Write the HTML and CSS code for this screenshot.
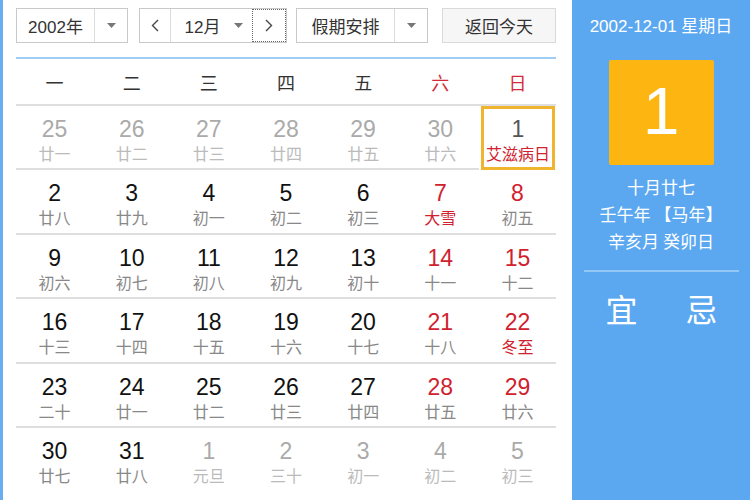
FILE: index.html
```html
<!DOCTYPE html>
<html lang="zh-CN">
<head>
<meta charset="utf-8">
<title>万年历</title>
<link rel="stylesheet" href="styles.css">
</head>
<body>
<div class="page">
  <div class="main">
    <div class="toolbar">
      <div class="sel year">
        <span class="sel-text">2002年</span>
        <span class="sel-arrow"><svg width="9" height="5" viewBox="0 0 9 5"><polygon points="0,0 9,0 4.5,5" fill="#777"/></svg></span>
      </div>
      <div class="sel month">
        <span class="nav"><svg width="8" height="13" viewBox="0 0 8 13"><polyline points="7,1 1.5,6.5 7,12" fill="none" stroke="#444" stroke-width="1.4"/></svg></span>
        <span class="sel-text">12月</span>
        <span class="sel-arrow inner"><svg width="9" height="5" viewBox="0 0 9 5"><polygon points="0,0 9,0 4.5,5" fill="#777"/></svg></span>
        <span class="nav next"><svg width="8" height="13" viewBox="0 0 8 13"><polyline points="1,1 6.5,6.5 1,12" fill="none" stroke="#444" stroke-width="1.4"/></svg></span>
      </div>
      <div class="sel holiday">
        <span class="sel-text">假期安排</span>
        <span class="sel-arrow"><svg width="9" height="5" viewBox="0 0 9 5"><polygon points="0,0 9,0 4.5,5" fill="#777"/></svg></span>
      </div>
      <div class="btn">返回今天</div>
    </div>
    <div class="blue-line"></div>
    <div class="week">
      <span>一</span><span>二</span><span>三</span><span>四</span><span>五</span><span class="red">六</span><span class="red">日</span>
    </div>
    <div class="grid">
      <div class="cell other"><b>25</b><i>廿一</i></div>
      <div class="cell other"><b>26</b><i>廿二</i></div>
      <div class="cell other"><b>27</b><i>廿三</i></div>
      <div class="cell other"><b>28</b><i>廿四</i></div>
      <div class="cell other"><b>29</b><i>廿五</i></div>
      <div class="cell other"><b>30</b><i>廿六</i></div>
      <div class="cell today wk"><b>1</b><i class="fest">艾滋病日</i></div>

      <div class="cell"><b>2</b><i>廿八</i></div>
      <div class="cell"><b>3</b><i>廿九</i></div>
      <div class="cell"><b>4</b><i>初一</i></div>
      <div class="cell"><b>5</b><i>初二</i></div>
      <div class="cell"><b>6</b><i>初三</i></div>
      <div class="cell wk"><b>7</b><i class="fest">大雪</i></div>
      <div class="cell wk"><b>8</b><i>初五</i></div>

      <div class="cell"><b>9</b><i>初六</i></div>
      <div class="cell"><b>10</b><i>初七</i></div>
      <div class="cell"><b>11</b><i>初八</i></div>
      <div class="cell"><b>12</b><i>初九</i></div>
      <div class="cell"><b>13</b><i>初十</i></div>
      <div class="cell wk"><b>14</b><i>十一</i></div>
      <div class="cell wk"><b>15</b><i>十二</i></div>

      <div class="cell"><b>16</b><i>十三</i></div>
      <div class="cell"><b>17</b><i>十四</i></div>
      <div class="cell"><b>18</b><i>十五</i></div>
      <div class="cell"><b>19</b><i>十六</i></div>
      <div class="cell"><b>20</b><i>十七</i></div>
      <div class="cell wk"><b>21</b><i>十八</i></div>
      <div class="cell wk"><b>22</b><i class="fest">冬至</i></div>

      <div class="cell"><b>23</b><i>二十</i></div>
      <div class="cell"><b>24</b><i>廿一</i></div>
      <div class="cell"><b>25</b><i>廿二</i></div>
      <div class="cell"><b>26</b><i>廿三</i></div>
      <div class="cell"><b>27</b><i>廿四</i></div>
      <div class="cell wk"><b>28</b><i>廿五</i></div>
      <div class="cell wk"><b>29</b><i>廿六</i></div>

      <div class="cell"><b>30</b><i>廿七</i></div>
      <div class="cell"><b>31</b><i>廿八</i></div>
      <div class="cell other"><b>1</b><i>元旦</i></div>
      <div class="cell other"><b>2</b><i>三十</i></div>
      <div class="cell other"><b>3</b><i>初一</i></div>
      <div class="cell other"><b>4</b><i>初二</i></div>
      <div class="cell other"><b>5</b><i>初三</i></div>
    </div>
  </div>
  <div class="side">
    <div class="side-date">2002-12-01 星期日</div>
    <div class="big-day">1</div>
    <div class="lunar">
      <div>十月廿七</div>
      <div>壬午年 【马年】</div>
      <div>辛亥月 癸卯日</div>
    </div>
    <div class="side-line"></div>
    <div class="yiji"><span>宜</span><span>忌</span></div>
  </div>
</div>
</body>
</html>
```

FILE: styles.css
```css
* { box-sizing: border-box; }
html, body { margin: 0; padding: 0; }
body {
  width: 750px;
  height: 500px;
  overflow: hidden;
  background: #fff;
  font-family: "Liberation Sans", "Noto Sans CJK SC", sans-serif;
  color: #222;
}
.page {
  display: flex;
  width: 750px;
  height: 500px;
}
.main {
  width: 572px;
  border-left: 3px solid #69adf0;
  padding: 8px 16px 0 13px;
}
.toolbar {
  display: flex;
  height: 35px;
  font-size: 17px;
  color: #333;
}
.sel, .btn {
  height: 35px;
  border: 1px solid #c9c9c9;
  background: #fff;
  display: flex;
  align-items: stretch;
}
.sel-text {
  flex: 1;
  display: flex;
  align-items: center;
  justify-content: center;
}
.sel-arrow {
  display: flex;
  align-items: center;
  justify-content: center;
  border-left: 1px solid #dcdcdc;
}
.sel-arrow.inner { border-left: none; width: 28px; }
.year { width: 112px; }
.year .sel-arrow { width: 33px; }
.month { width: 148px; margin-left: 11px; }
.nav {
  width: 31px;
  display: flex;
  align-items: center;
  justify-content: center;
  border-right: 1px solid #dcdcdc;
}
.nav.next {
  width: 34px;
  border-right: none;
  border: 1px dotted #666;
}
.month .sel-text { padding-left: 10px; }
.holiday { width: 132px; margin-left: 9px; }
.holiday .sel-arrow { width: 33px; }
.btn {
  width: 114px;
  margin-left: 14px;
  background: #f6f6f6;
  border-color: #dadada;
  align-items: center;
  justify-content: center;
}
.blue-line {
  height: 2px;
  background: #9fcdf3;
  margin-top: 14px;
}
.week {
  display: grid;
  grid-template-columns: repeat(7, 1fr);
  height: 47px;
  align-items: center;
  font-size: 18px;
  color: #333;
  font-family: "Noto Sans CJK SC", sans-serif;
  border-bottom: 2px solid #dedede;
}
.week span { text-align: center; }
.week .red { color: #d22c3a; }
.grid {
  display: grid;
  grid-template-columns: repeat(7, 1fr);
  grid-auto-rows: 64.4px;
}
.cell {
  display: flex;
  flex-direction: column;
  align-items: center;
  border-bottom: 2px solid #dedede;
  padding-top: 10px;
}
.grid .cell:nth-last-child(-n+7) { border-bottom: none; }
.cell b {
  font-weight: normal;
  font-size: 23px;
  line-height: 26px;
  color: #111;
}
.cell i {
  font-style: normal;
  font-size: 16px;
  line-height: 22px;
  margin-top: 0;
  color: #888;
  font-family: "Noto Sans CJK SC", sans-serif;
}
.cell.wk b { color: #d0222e; }
.cell i.fest { color: #d0222e; }
.cell.other b { color: #aaa; }
.cell.other i { color: #bbb; }
.cell.today {
  border: 3px solid #efb52e;
  padding-top: 7px;
  margin: 0 1px 0 2px;
}
.cell.today b { color: #555; }
.side {
  width: 178px;
  background: #5ba8f1;
  color: #fff;
  display: flex;
  flex-direction: column;
  align-items: center;
  font-family: "Liberation Sans", "Noto Sans CJK SC", sans-serif;
}
.side-date {
  margin-top: 15px;
  font-size: 17px;
  line-height: 24px;
}
.big-day {
  margin-top: 21px;
  width: 105px;
  height: 105px;
  background: #fdb512;
  border-radius: 2px;
  display: flex;
  align-items: center;
  justify-content: center;
  font-size: 66px;
  padding-bottom: 4px;
}
.lunar {
  margin-top: 8px;
  text-align: center;
  font-size: 17px;
  line-height: 27px;
  font-family: "Noto Sans CJK SC", sans-serif;
}
.side-line {
  width: 155px;
  height: 2px;
  background: #93c7f5;
  margin-top: 16px;
}
.yiji {
  width: 155px;
  display: flex;
  justify-content: space-between;
  padding: 0 21px 0 22px;
  margin-top: 15px;
  font-size: 32px;
  line-height: 42px;
  font-family: "Noto Sans CJK SC", sans-serif;
}
```
